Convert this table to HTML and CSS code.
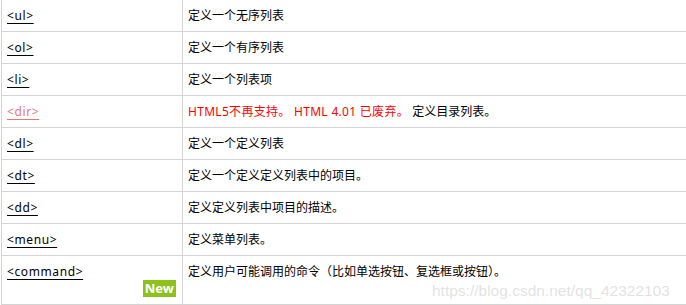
FILE: index.html
```html
<!DOCTYPE html>
<html lang="zh-CN">
<head>
<meta charset="utf-8">
<link rel="stylesheet" href="styles.css">
</head>
<body>
<table class="ref">
  <tr><td class="tag"><a class="tl" href="#">&lt;ul&gt;</a></td><td class="desc">定义一个无序列表</td></tr>
  <tr><td class="tag"><a class="tl" href="#">&lt;ol&gt;</a></td><td class="desc">定义一个有序列表</td></tr>
  <tr><td class="tag"><a class="tl" href="#">&lt;li&gt;</a></td><td class="desc">定义一个列表项</td></tr>
  <tr><td class="tag"><a class="tl dep" href="#">&lt;dir&gt;</a></td><td class="desc"><span class="red">HTML5不再支持。 HTML 4.01 已废弃。</span> 定义目录列表。</td></tr>
  <tr><td class="tag"><a class="tl" href="#">&lt;dl&gt;</a></td><td class="desc">定义一个定义列表</td></tr>
  <tr><td class="tag"><a class="tl" href="#">&lt;dt&gt;</a></td><td class="desc">定义一个定义定义列表中的项目。</td></tr>
  <tr><td class="tag"><a class="tl" href="#">&lt;dd&gt;</a></td><td class="desc">定义定义列表中项目的描述。</td></tr>
  <tr><td class="tag"><a class="tl" href="#">&lt;menu&gt;</a></td><td class="desc">定义菜单列表。</td></tr>
  <tr><td class="tag last"><a class="tl" href="#">&lt;command&gt;</a><div class="newrow"><span class="new">New</span></div></td><td class="desc last">定义用户可能调用的命令（比如单选按钮、复选框或按钮）。</td></tr>
</table>
<div class="wm">https://blog.csdn.net/qq_42322103</div>
</body>
</html>
```
FILE: styles.css
```css
html, body {
  margin: 0;
  padding: 0;
  background: #fff;
  overflow: hidden;
}
body {
  position: relative;
  width: 686px;
  height: 305px;
  font-family: "Noto Sans", "Noto Sans CJK SC", sans-serif;
  font-size: 12px;
  color: #000;
}
.ref {
  border-collapse: collapse;
  margin: -1px 0 0 1px;
  width: 700px;
}
.ref td {
  border: 1px solid #d4d4d4;
  padding: 7px 6px 7px 5px;
  line-height: 17px;
  vertical-align: top;
}
.ref td.tag {
  width: 169px;
}
.tl {
  color: #000;
  letter-spacing: 0.6px;
  text-decoration: underline;
  text-underline-offset: 3px;
  text-decoration-thickness: 1px;
}
.tl.dep {
  color: #e07a7a;
}
.red {
  color: #f00;
  letter-spacing: 0.3px;
}
.newrow {
  display: flex;
  justify-content: flex-end;
}
.new {
  background: #8cc21b;
  color: #fff;
  font-weight: bold;
  font-size: 13px;
  line-height: 17px;
  padding: 0 2px;
}
.wm {
  position: absolute;
  left: 432px;
  top: 282px;
  font-family: "Liberation Sans", Arial, sans-serif;
  font-size: 15.5px;
  color: rgba(190, 190, 190, 0.45);
  white-space: nowrap;
}
```
